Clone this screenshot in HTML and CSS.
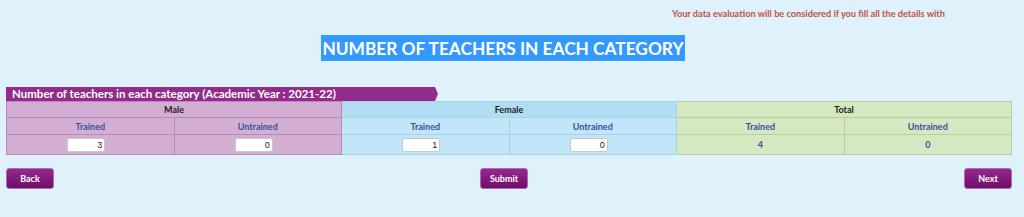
FILE: index.html
```html
<!DOCTYPE html>
<html lang="en">
<head>
  <meta charset="UTF-8" />
  <title>Number of teachers in each category</title>
  <link rel="stylesheet" href="styles.css">
</head>
<body>
  <p class="notice">Your data evaluation will be considered if you fill all the details with</p>

  <h1 class="page-title"><span>NUMBER OF TEACHERS IN EACH CATEGORY</span></h1>

  <div class="panel">
    <div class="panel-head">Number of teachers in each category (Academic Year : 2021-22)</div>
    <table class="teachers">
      <tr class="group-row">
        <th colspan="2" class="male">Male</th>
        <th colspan="2" class="female">Female</th>
        <th colspan="2" class="total">Total</th>
      </tr>
      <tr class="sub-row">
        <th class="male">Trained</th>
        <th class="male">Untrained</th>
        <th class="female">Trained</th>
        <th class="female">Untrained</th>
        <th class="total">Trained</th>
        <th class="total">Untrained</th>
      </tr>
      <tr class="data-row">
        <td class="male"><input type="text" value="3" /></td>
        <td class="male"><input type="text" value="0" /></td>
        <td class="female"><input type="text" value="1" /></td>
        <td class="female"><input type="text" value="0" /></td>
        <td class="total">4</td>
        <td class="total">0</td>
      </tr>
    </table>
  </div>

  <div class="actions">
    <button class="btn">Back</button>
    <button class="btn submit">Submit</button>
    <button class="btn">Next</button>
  </div>
</body>
</html>
```

FILE: styles.css
```css
body {
  margin: 0;
  padding: 0 12px 0 6px;
  background: #dff1fb;
  font-family: Lato, 'Open Sans', sans-serif;
  color: #333;
}
.notice {
  margin: 0;
  padding: 8px 0 0 666px;
  height: 12px;
  font-size: 9.2px;
  font-weight: bold;
  color: #c0504d;
}
.page-title {
  margin: 17px 0 0;
  text-align: center;
  font-size: 17.3px;
  line-height: 24px;
  font-weight: bold;
  padding-right: 12px;
}
.page-title span {
  background: #3399ff;
  color: #fff;
  padding: 3px 1px 2px;
}
.panel {
  margin-top: 26px;
}
.panel-head {
  width: 420px;
  height: 14px;
  line-height: 14px;
  padding: 0 6px;
  background: #922b8b;
  color: #fff;
  font-size: 11.5px;
  font-weight: bold;
  clip-path: polygon(0 0, 429px 0, 432px 50%, 429px 100%, 0 100%);
}
.teachers {
  width: 100%;
  border-collapse: collapse;
  table-layout: fixed;
  font-size: 9px;
  font-weight: bold;
}
.teachers th,
.teachers td {
  text-align: center;
  padding: 0;
}
.group-row th {
  height: 15px;
  color: #222;
}
.sub-row th {
  height: 16px;
  color: #3a4f9b;
}
.data-row td {
  height: 19px;
  color: #3a4f9b;
}
.male {
  background: #d2afd2;
  border: 1px solid #b98ab9;
}
.female {
  background: #c1e6f8;
  border: 1px solid #a5d3ea;
}
.group-row .female {
  background: #b0ddf4;
}
.total {
  background: #d6e8c2;
  border: 1px solid #b4d09c;
}
.teachers input {
  width: 32px;
  height: 12px;
  padding: 0 2px;
  border: 1px solid #c8c8c8;
  border-radius: 2px;
  text-align: right;
  font-family: 'Liberation Sans', sans-serif;
  font-size: 9px;
  color: #222;
  background: #fff;
  margin-right: 8px;
}
.actions {
  display: flex;
  justify-content: space-between;
  margin-top: 13px;
}
.btn {
  width: 48px;
  height: 21px;
  border: 1px solid #b06ab0;
  border-radius: 3px;
  background: linear-gradient(#96288f, #6e0e6a);
  color: #fff;
  font-family: Lato, sans-serif;
  font-size: 9px;
  font-weight: bold;
  cursor: pointer;
}
.submit {
  margin-right: 10px;
}
```
